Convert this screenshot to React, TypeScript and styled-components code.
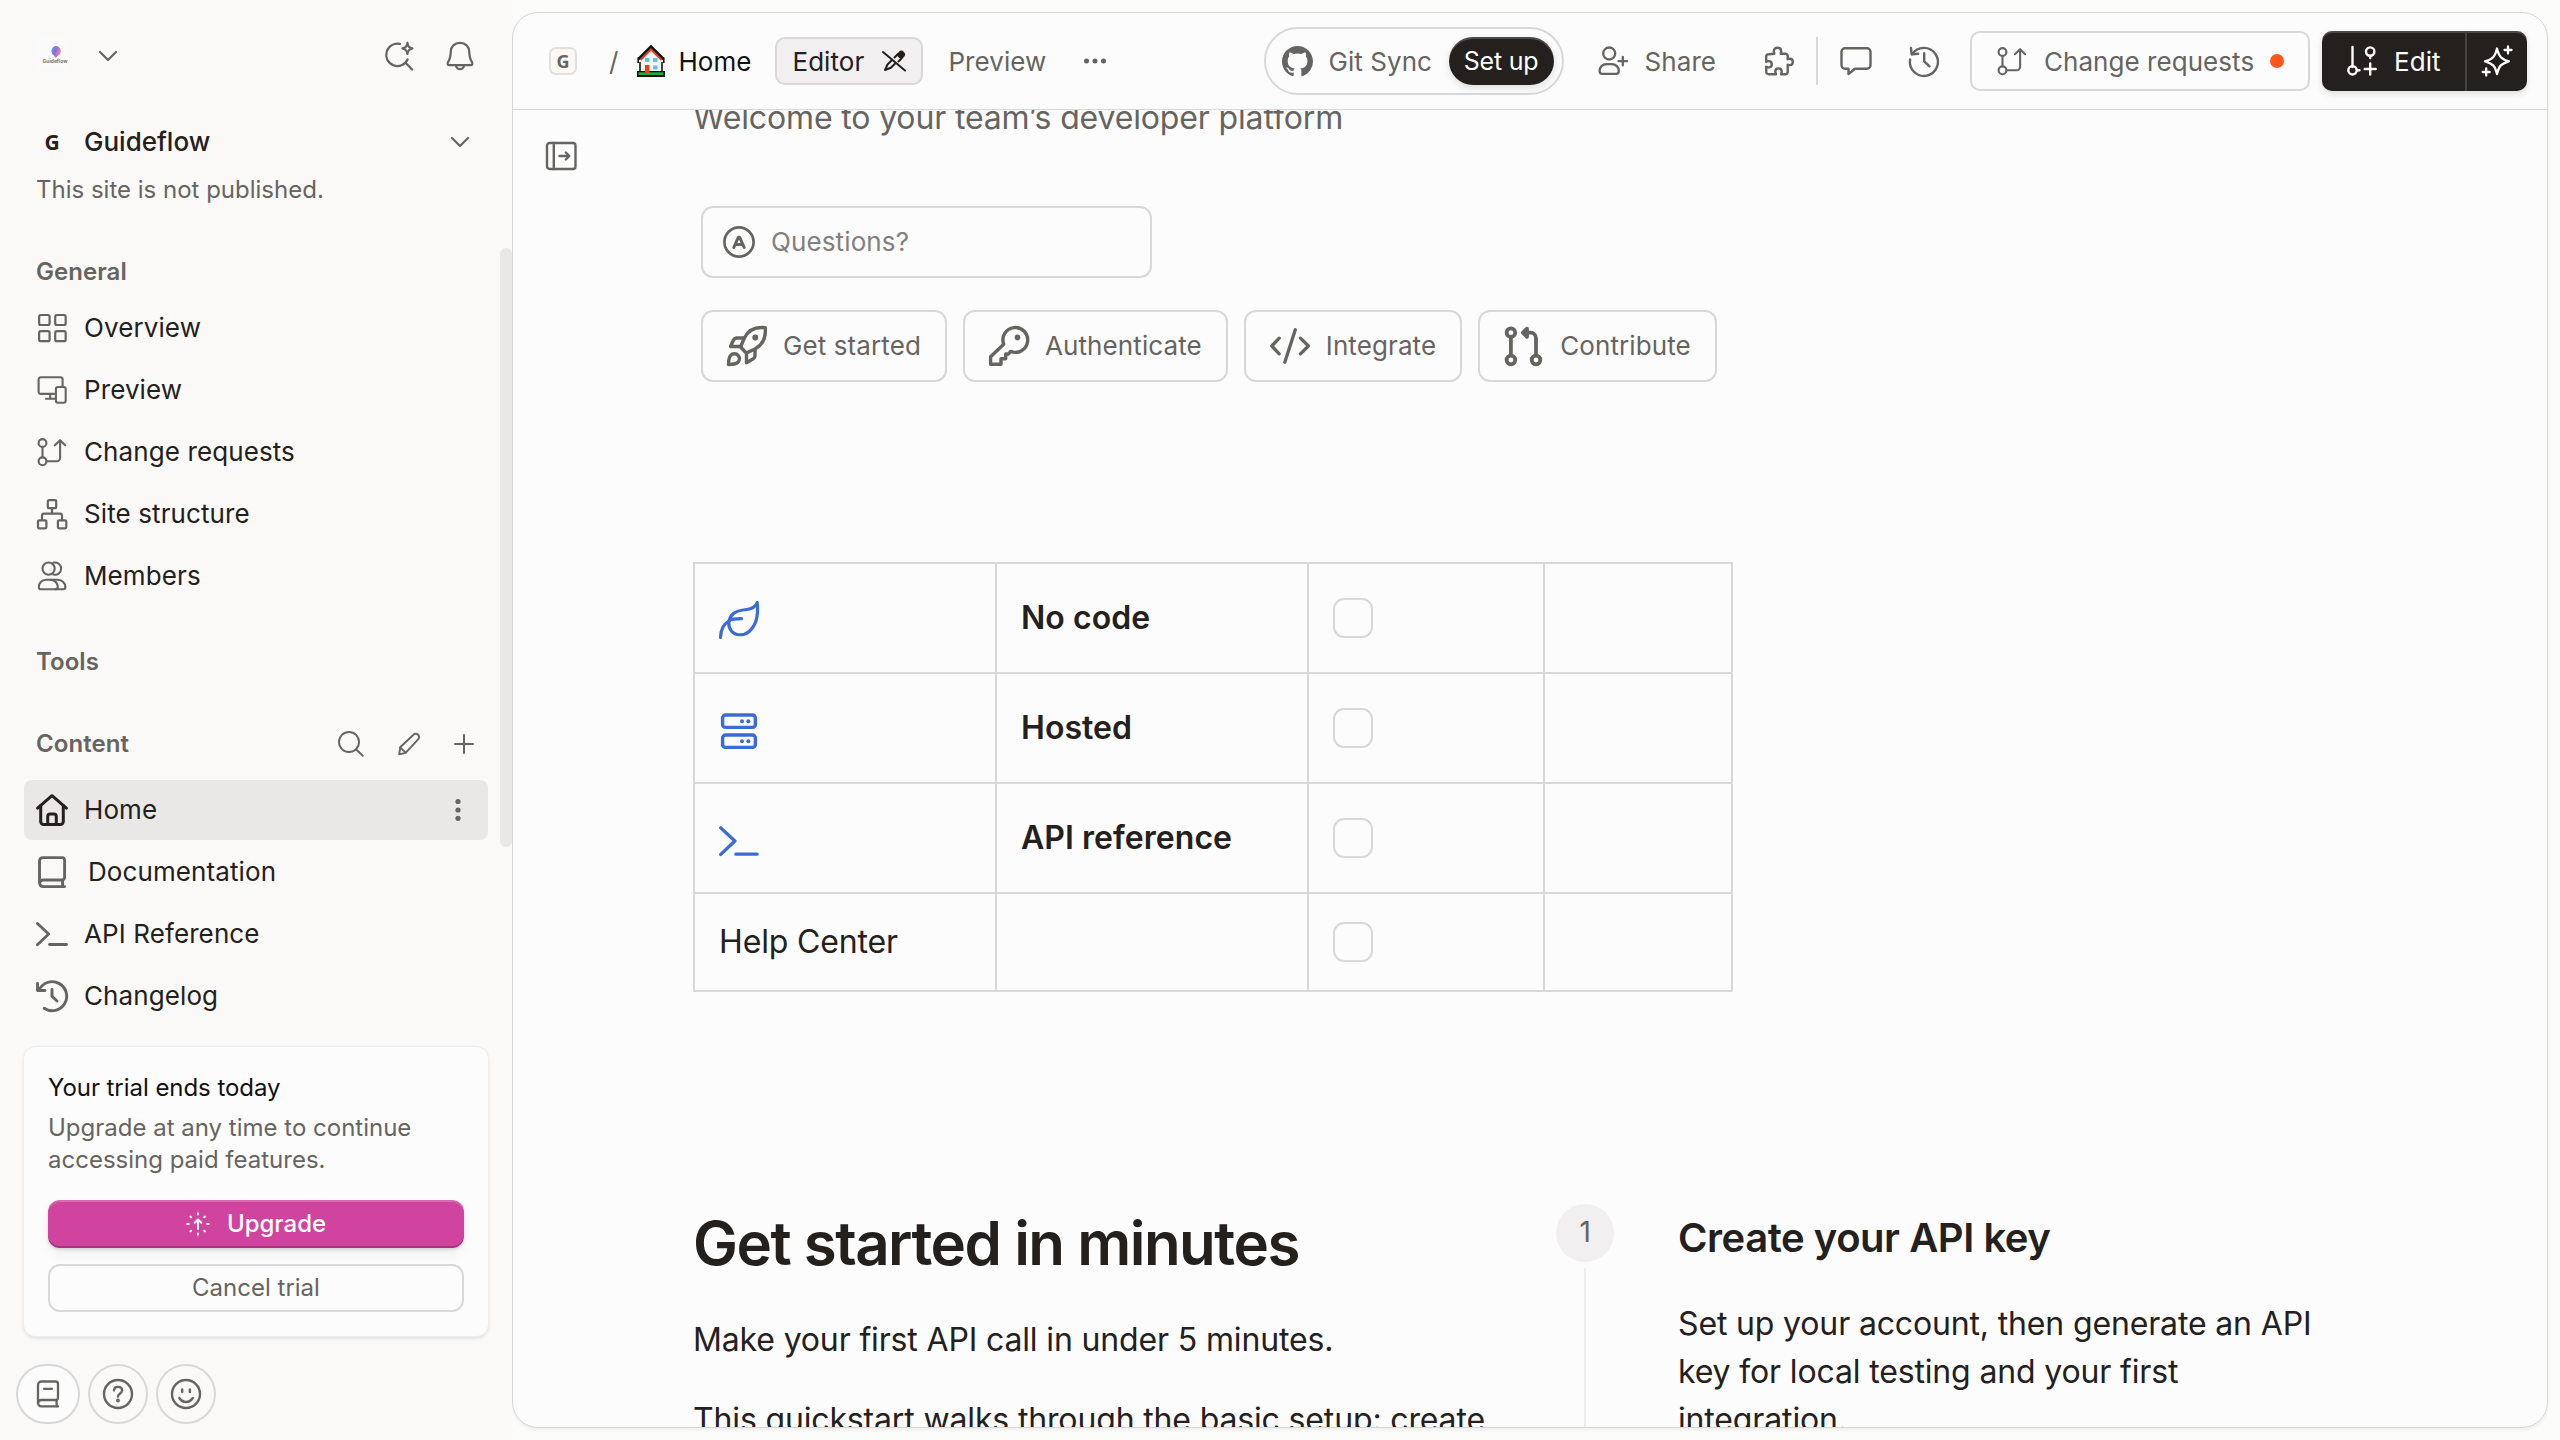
import React from "react";
import styled, { createGlobalStyle } from "styled-components";
import { BsGithub } from "react-icons/bs";

const ink = "#23201d";
const muted = "#666461";
const line = "#dad8d6";
const paper = "#fcfcfc";

const GlobalStyle = createGlobalStyle`
  * { box-sizing: border-box; }
  body {
    margin: 0;
    background: #fcfcfb;
    font-family: Inter, "Liberation Sans", sans-serif;
    color: ${ink};
    overflow: hidden;
  }
  h1, h2, p { margin: 0; }
  button { font: inherit; color: inherit; cursor: pointer; }
  svg { display: block; flex: none; }
`;

/* ---------- icons ---------- */

type IconProps = {
  w?: number;
  h?: number;
  sw?: number;
  color?: string;
  children: React.ReactNode;
};

const Icon = ({ w = 32, h = w, sw = 2.2, color = "currentColor", children }: IconProps) => (
  <svg
    width={w}
    height={h}
    viewBox={`0 0 ${w} ${h}`}
    fill="none"
    stroke={color}
    strokeWidth={sw}
    strokeLinecap="round"
    strokeLinejoin="round"
    overflow="visible"
  >
    {children}
  </svg>
);

const ChevronIcon = () => (
  <Icon w={18} h={10} sw={2.2}><path d="M1 1l8 8 8-8" /></Icon>
);
const AskIcon = () => (
  <Icon w={30} sw={2.2}>
    <path d="M15 2.9A11.2 11.2 0 1 0 22.6 18.5" />
    <path d="M20.5 21.7l6.6 6.8" />
    <path d="M22.4 1.9c.8 3.6 1.6 4.6 5 5.5-3.4.9-4.2 1.9-5 5.5-.8-3.6-1.6-4.6-5-5.5 3.4-.9 4.2-1.9 5-5.5z" />
  </Icon>
);
const BellIcon = () => (
  <Icon w={28} h={30} sw={2.2}>
    <path d="M14 1.8c-5.6 0-9 4-9.2 8.6-.2 5-.7 7.5-2.5 10.2-1.2 1.9-.9 3.6 1.2 3.6h21c2.1 0 2.4-1.7 1.2-3.6-1.8-2.700-2.300-5.200-2.500-10.200C23 5.800 19.600 1.800 14 1.800z" />
    <path d="M10.200 25.500c.6 1.800 2 2.700 3.800 2.700s3.200-.9 3.800-2.700" />
  </Icon>
);
const GridIcon = () => (
  <Icon>
    <rect x="3.1" y="3" width="10.5" height="10" rx="1.8" />
    <rect x="19.2" y="3" width="10.5" height="10" rx="1.8" />
    <rect x="3.1" y="19.2" width="10.5" height="10" rx="1.8" />
    <rect x="19.2" y="19.2" width="10.5" height="10" rx="1.8" />
  </Icon>
);
const DevicesIcon = () => (
  <Icon sw={2.1}>
    <path d="M18 19.9H4.8a2.2 2.2 0 0 1-2.2-2.2V5.5a2.2 2.2 0 0 1 2.2-2.2H24.4a2.2 2.2 0 0 1 2.2 2.2V12" />
    <path d="M14.2 20v4.6M10 24.700h8.500" />
    <rect x="19.900" y="13" width="9.800" height="15.800" rx="2" />
  </Icon>
);
const RequestIcon = () => (
  <Icon sw={2.1}>
    <circle cx="6.5" cy="7" r="3.9" />
    <circle cx="6.5" cy="25.3" r="3.9" />
    <path d="M6.5 11v10.3M10.5 25.3H20.5a3.6 3.6 0 0 0 3.6-3.6V4.5M18.9 9.2L24.1 4.2l5 5" />
  </Icon>
);
const SitemapIcon = () => (
  <Icon>
    <rect x="11.800" y="2.200" width="8.400" height="8" rx="1.200" />
    <rect x="2" y="22.300" width="8.400" height="8" rx="1.200" />
    <rect x="21.900" y="22.300" width="8.400" height="8" rx="1.200" />
    <path d="M16 10.500v5M6 22v-4.300a2 2 0 0 1 2-2h16a2 2 0 0 1 2 2V22" />
  </Icon>
);
const MembersIcon = () => (
  <Icon sw={2.1}>
    <circle cx="12.600" cy="8.600" r="6.100" />
    <path d="M17.300 2.800a6.100 6.100 0 1 1 0 11.700" />
    <path d="M10 19.800h4.400c4.400 0 7.400 3.600 7.400 7.200 0 1.500-.8 2.200-2.200 2.200H5c-1.400 0-2.200-.7-2.200-2.200 0-3.600 2.800-7.200 7.200-7.200z" />
    <path d="M14.400 19.800h7.400c4.400 0 7.600 3.600 7.600 7.200 0 1.500-.8 2.200-2.200 2.200h-8" />
  </Icon>
);
const SearchIcon = () => (
  <Icon w={26} sw={1.9}><circle cx="11" cy="11" r="10" /><path d="M18 18.200l6.800 6.600" /></Icon>
);
const PencilIcon = () => (
  <Icon w={24} sw={1.9}>
    <path d="M2.200 22.300l1-7L16.500 2.700a3.200 3.200 0 0 1 4.600 0 3.200 3.200 0 0 1 0 4.600L8.600 20.800z" />
    <path d="M3.300 15.400l5.300 5.300" />
  </Icon>
);
const PlusIcon = () => (
  <Icon w={20} sw={2}><path d="M10 1v18M1 10h18" /></Icon>
);
const HomeIcon = () => (
  <Icon sw={3}>
    <path d="M1.600 14.200L16 1.700l14.400 12.500" />
    <path d="M4.700 11.500V27.500a3 3 0 0 0 3 3h16.600a3 3 0 0 0 3-3V11.500" />
    <path d="M11.700 30V22.500a2.500 2.500 0 0 1 2.500-2.500h3.600a2.500 2.500 0 0 1 2.500 2.500V30" />
  </Icon>
);
const BookIcon = () => (
  <Icon sw={2.9}>
    <path d="M3.500 27V5a3.400 3.400 0 0 1 3.400-3.400h19.200A2.500 2.500 0 0 1 28.600 4v17.500a2.500 2.500 0 0 1-2.500 2.500H7a3.300 3.300 0 0 0 0 6.600H28.600" />
    <path d="M26.600 24.500v6" />
  </Icon>
);
const TerminalIcon = ({ size = 32, sw = 2.8 }: { size?: number; sw?: number }) => (
  <svg width={size} height={size} viewBox="0 0 32 32" fill="none" stroke="currentColor" strokeWidth={sw} strokeLinecap="round" strokeLinejoin="round">
    <path d="M1.400 5.500L12.700 16 1.400 26.700M13.500 26.500h17" />
  </svg>
);
const ChangelogIcon = () => (
  <Icon sw={2.9}>
    <path d="M3 10.200A14.500 14.500 0 1 1 8.200 28.300" />
    <path d="M1.500 3.500v7h7.500" />
    <path d="M16 9.500v6.800l5 4.700" />
  </Icon>
);
const KebabIcon = () => (
  <Icon w={6} h={24} sw={0}>
    <g fill="currentColor"><circle cx="3" cy="3.500" r="2.600" /><circle cx="3" cy="12" r="2.600" /><circle cx="3" cy="20.300" r="2.600" /></g>
  </Icon>
);
const UpgradeIcon = () => (
  <Icon w={24} sw={2}>
    <path d="M12 17V8M8.700 10.800L12 7.500l3.300 3.300" />
    <path d="M12 1.200v1.300M12 21.500v1.300M1.200 12h1.600M21.200 12h1.600M4.400 4.600l.7.700M18.900 4.600l-.7.700M4.400 19.400l.7-.7M18.900 19.400l-.7-.7" />
  </Icon>
);
const ManualIcon = () => (
  <Icon w={24} h={28} sw={2.3}>
    <path d="M2 23.500V4.800A3.300 3.300 0 0 1 5.300 1.500H19.500A2.500 2.500 0 0 1 22 4V17.500A2.500 2.500 0 0 1 20.500 20H5.300a3.200 3.200 0 0 0 0 6.400H22" />
    <path d="M20.600 20.300v6M8 8.800h8" />
  </Icon>
);
const HelpIcon = () => (
  <Icon w={32} sw={2.4}>
    <circle cx="16" cy="16" r="14" />
    <path d="M12 12.300c.2-2.200 1.900-3.400 4-3.400 2.400 0 4.100 1.400 4.100 3.600 0 2.900-4.100 3-4.100 6" />
    <circle cx="16" cy="22.500" r=".7" fill="currentColor" />
  </Icon>
);
const SmileIcon = () => (
  <Icon w={32} sw={2.4}>
    <circle cx="16" cy="16" r="14" />
    <path d="M12.200 11.500v2.500M19.900 11.500v2.500M9.300 20c3.500 5.300 10 5.300 13.500 0" />
  </Icon>
);
const HouseEmoji = () => (
  <svg width="28" height="32" viewBox="0 0 28 32">
    <path d="M4 15V26H24V15L14 5z" fill="#f4f4f1" />
    <path d="M1.500 14L14 1.500 26.500 14" fill="none" stroke="#111" strokeWidth="2.600" />
    <path d="M3.500 15L14 4.500 24.500 15" fill="none" stroke="#e8401c" strokeWidth="1.800" />
    <path d="M1.200 12.500V18M26.800 12.500V18M3 17v10M25 17v10" stroke="#111" strokeWidth="1.600" />
    <rect x="0" y="26" width="28" height="6" fill="#111" />
    <rect x="1.500" y="27.300" width="25" height="2.700" fill="#1fae2b" />
    <rect x="8" y="20" width="4.500" height="8.500" fill="#e8401c" />
    <rect x="8" y="13" width="4.500" height="4" fill="#53c7ee" />
    <rect x="16" y="13" width="4.500" height="4" fill="#53c7ee" />
    <rect x="16" y="20.500" width="4.500" height="4" fill="#53c7ee" />
  </svg>
);
const PenSlashIcon = () => (
  <Icon w={24} h={20} sw={2}>
    <path d="M15.500 3.500l2-1.900a2.600 2.600 0 0 1 3.700 3.700l-2 2z" fill="currentColor" />
    <path d="M12.500 6.500l3-3 4 4-3 3M9.500 9.500L5.500 13.500 3 19l5.800-2.200L13 12.800" />
    <path d="M1 1l22 18.500" />
  </Icon>
);
const DotsIcon = () => (
  <Icon w={24} h={6} sw={0}>
    <g fill="currentColor"><circle cx="3.500" cy="3" r="2.500" /><circle cx="12" cy="3" r="2.500" /><circle cx="20.500" cy="3" r="2.500" /></g>
  </Icon>
);
const PersonPlusIcon = () => (
  <Icon w={30} h={30} sw={2.3}>
    <circle cx="11.200" cy="7.500" r="6" />
    <path d="M8.600 18.200h5.200c4.200 0 7 3 7 6.800 0 1.900-.9 2.900-2.600 2.900H4.200c-1.700 0-2.600-1-2.600-2.900 0-3.800 2.800-6.800 7-6.800z" />
    <path d="M24.800 10.800v8.600M20.500 15.100h8.600" />
  </Icon>
);
const PuzzleIcon = () => (
  <Icon w={30} sw={2.4}>
    <path d="M10.300 7.800c0-.5-.5-1.200-.5-2.400C9.800 3.100 11.400 1.800 13.500 1.800s3.700 1.300 3.700 3.600c0 1.200-.5 1.900-.5 2.400h4.600c1.500 0 2.400.9 2.400 2.400v3c.6 0 1.200-.5 2-.5 1.900 0 3.100 1.400 3.100 3.200s-1.200 3.200-3.100 3.200c-.8 0-1.400-.5-2-.5v7.200c0 1.500-.9 2.400-2.400 2.400h-4.200c0-1 .6-1.500.6-2.700 0-1.900-1.300-3.100-3.200-3.100s-3.200 1.200-3.200 3.100c0 1.200.6 1.700.6 2.700H5c-1.800 0-2.800-1-2.800-2.800v-4.600c.9 0 1.400.6 2.400.6 1.900 0 3.200-1.300 3.200-3.100s-1.300-3.200-3.200-3.200c-1 0-1.500.6-2.400.6v-5.100c0-1.500.9-2.400 2.400-2.400z" />
  </Icon>
);
const CommentIcon = () => (
  <Icon w={32} h={30} sw={2.4}>
    <path d="M5 2.200h22a3.500 3.500 0 0 1 3.500 3.500v13.600a3.500 3.500 0 0 1-3.500 3.500H15l-6.500 5.200v-5.200H5a3.500 3.500 0 0 1-3.500-3.500V5.700A3.500 3.500 0 0 1 5 2.200z" />
  </Icon>
);
const HistoryIcon = () => (
  <Icon w={32} sw={2.4}>
    <path d="M4.200 9.200A14 14 0 1 1 2.100 14.500" />
    <path d="M3 3l.6 6.400 6.500-.6" />
    <path d="M16.200 8.300v8l5.300 5" />
  </Icon>
);
const BranchPlusIcon = () => (
  <Icon w={32} sw={2.4}>
    <path d="M6.500 2v20" />
    <circle cx="6.500" cy="25.300" r="4.200" />
    <circle cx="24.200" cy="6.600" r="4.200" />
    <path d="M24.200 11v2M11 25.300h2.500M24.200 18.500v11M18.700 24h11" />
  </Icon>
);
const SparkleIcon = () => (
  <Icon w={32} sw={2.3}>
    <path d="M16 3.500c2 8.300 4.300 10.600 12 12.800-7.700 2.200-10 4.500-12 12.800C14 20.800 11.700 18.500 4 16.300 11.700 14.100 14 11.800 16 3.500z" />
    <path d="M27 1.500v7M23.500 5h7M5.200 23.500v7M1.700 27h7" />
  </Icon>
);
const PanelIcon = () => (
  <Icon w={32} h={30} sw={2.4}>
    <rect x="2" y="2" width="28.500" height="26" rx="2.600" />
    <path d="M8.800 2v26M14.500 15h9.500M20.800 11.500l3.500 3.500-3.500 3.500" />
  </Icon>
);
const AssistantIcon = () => (
  <Icon w={32} sw={2.7}>
    <circle cx="16" cy="16" r="14.600" />
    <path d="M10.800 21.500L15.400 11.200h1.200L21.200 21.500M13 18.400h6" strokeWidth="3" />
  </Icon>
);
const RocketIcon = () => (
  <Icon w={40} sw={3.4}>
    <path d="M38.300 1.700C29 .6 21.500 3.500 17.400 12L13.500 21l5.800 6 9.200-4.200C37 18 39 11 38.300 1.700z" />
    <path d="M17 12H9.500c-1.500 0-2.200.6-2.900 1.800L3.500 20.500H14M28 23.500V30c0 1.400-.5 2.100-1.700 2.800l-6.800 3.900V27" />
    <path d="M1.500 38.500c0-4 .3-7 2-9 2-2.300 5.800-2.300 7.600-.2 1.900 2.200 1.600 5.500-.6 7.400-2 1.600-5 1.800-9 1.800z" />
    <circle cx="28.300" cy="11.400" r="1.300" fill="currentColor" />
  </Icon>
);
const KeyIcon = () => (
  <Icon w={40} sw={3.4}>
    <path d="M14.700 18.300A12.400 12.400 0 1 1 21.600 25.400L19.500 28H16.700v4.700H12v5.600H1.600v-7.500z" />
    <circle cx="28.500" cy="11.400" r="1.100" fill="currentColor" />
  </Icon>
);
const CodeIcon = () => (
  <Icon w={40} sw={3.3}><path d="M9.200 12.200L1.800 20l7.400 7.800M30.500 12.200l7.900 7.800-7.900 7.800M25.300 3.800L14.800 36.200" /></Icon>
);
const PullIcon = () => (
  <Icon w={40} sw={3.8}>
    <circle cx="6.900" cy="6.700" r="4.300" />
    <circle cx="6.900" cy="34" r="4.300" />
    <circle cx="32" cy="34" r="4.300" />
    <path d="M6.900 11.500v17.700M32 29.200V12.300A5.600 5.600 0 0 0 26.400 6.700H20M23 2.600L18.900 6.700l4.100 4.100z" />
  </Icon>
);
const LeafIcon = () => (
  <Icon w={40} sw={3.2}>
    <path d="M1.500 36.500c.2-8 4-14 9-17 2.500-1.600 6-1.800 12-1.800" />
    <path d="M38.300 1.700c-1.500 3.500-5 6.300-10.500 6.800-5.500.5-10 .9-13.600 4.200-5.200 4.900-5.700 12.300-2 17 4.300 5.200 12.200 5.400 18 .7C37.500 24.300 39.300 12.500 38.300 1.700z" />
  </Icon>
);
const ServerIcon = () => (
  <Icon w={40} sw={3.4}>
    <rect x="3.600" y="4" width="32.800" height="12.400" rx="3" />
    <rect x="3.600" y="24" width="32.800" height="12.400" rx="3" />
    <g fill="currentColor" stroke="none">
      <circle cx="23" cy="10.200" r="2" /><circle cx="29.300" cy="10.200" r="2" />
      <circle cx="23" cy="30.200" r="2" /><circle cx="29.300" cy="30.200" r="2" />
    </g>
  </Icon>
);

/* ---------- shell ---------- */

const Shell = styled.div`
  display: grid;
  grid-template-columns: 512px 1fr;
  width: 2560px;
  height: 1440px;
`;

/* ---------- sidebar ---------- */

const Sidebar = styled.aside`
  position: relative;
  display: flex;
  flex-direction: column;
  background: #faf9f7;
  padding: 0 24px;
  color: ${muted};
`;
const SideTop = styled.div`
  display: flex;
  align-items: center;
  height: 112px;
  padding: 0 14px 0 12px;
`;
const Logo = styled.div`
  display: flex;
  flex-direction: column;
  align-items: center;
  width: 32px;
  height: 32px;
  margin: 0 31px 5px 0;
  padding: 8px 0 0 6px;
  background: #fbfafa;
`;
const LogoText = styled.span`
  font-size: 5px;
  line-height: 7px;
  font-weight: 700;
  color: #777;
`;
const TopActions = styled.div`
  display: flex;
  align-items: center;
  gap: 31px;
  margin-left: auto;
`;
const SiteRow = styled.div`
  display: flex;
  align-items: center;
  height: 60px;
  padding: 0 19px 0 12px;
  color: ${ink};
  font-size: 26px;
  font-weight: 500;
`;
const SiteName = styled.span`
  flex: 1;
  margin-left: 16px;
  padding-bottom: 2px;
`;
const SiteInitial = styled.span`
  width: 32px;
  text-align: center;
  font: 700 21px/32px "Noto Sans", sans-serif;
`;
const Muted = styled.span`
  display: flex;
  color: ${muted};
`;
const SiteStatus = styled.p`
  padding-left: 12px;
  font-size: 24px;
  line-height: 36px;
`;
const SectionHead = styled.div<{ $top: number }>`
  display: flex;
  align-items: center;
  height: 46px;
  margin: ${(p) => p.$top}px 0 2px;
  padding: 0 14px 0 12px;
  font-size: 24px;
  font-weight: 600;
  letter-spacing: 0.05px;
`;
const HeadActions = styled.div`
  display: flex;
  align-items: center;
  gap: 33px;
  margin: 2px 0 0 auto;
`;
const NavList = styled.nav<{ $top: number }>`
  display: flex;
  flex-direction: column;
  gap: 2px;
  margin-top: ${(p) => p.$top}px;
`;
const NavItem = styled.a<{ $active?: boolean }>`
  display: flex;
  align-items: center;
  height: 60px;
  padding: 0 27px 0 12px;
  border-radius: 8px;
  background: ${(p) => (p.$active ? "#e9e8e6" : "transparent")};
  color: ${(p) => (p.$active ? ink : muted)};
`;
const NavLabel = styled.span<{ $indent?: number }>`
  flex: 1;
  margin-left: ${(p) => 16 + (p.$indent ?? 0)}px;
  padding-bottom: 2px;
  color: ${ink};
  font-size: 26px;
  letter-spacing: 0.1px;
`;
const TrialCard = styled.section`
  display: flex;
  flex-direction: column;
  height: 289px;
  margin-top: 21px;
  padding: 24px 24px 24px;
  border-radius: 12px;
  background: ${paper};
  box-shadow: 0 0 0 1px #eeedeb, 0 2px 4px rgba(0, 0, 0, 0.12);
  font-size: 24px;
  line-height: 32px;
`;
const TrialTitle = styled.p`
  margin: 1px 0 8px;
  color: #111;
  letter-spacing: -0.05px;
  line-height: 32px;
`;
const CardButton = styled.button<{ $primary?: boolean }>`
  display: flex;
  align-items: center;
  justify-content: center;
  gap: 17px;
  height: 48px;
  flex: none;
  padding: 0;
  border-radius: 12px;
  border: ${(p) => (p.$primary ? "0" : `2px solid ${line}`)};
  margin-top: ${(p) => (p.$primary ? "auto" : "16px")};
  background: ${(p) => (p.$primary ? "#d0439e" : paper)};
  color: ${(p) => (p.$primary ? "#fff" : muted)};
  font-weight: ${(p) => (p.$primary ? 500 : 400)};
  box-shadow: ${(p) =>
    p.$primary
      ? "inset 0 2px 0 rgba(255,255,255,.2), inset 0 -2px 0 rgba(0,0,0,.22), 0 2px 3px rgba(0,0,0,.12), 0 6px 12px rgba(0,0,0,.05)"
      : "none"};
`;
const SideFooter = styled.div`
  display: flex;
  gap: 8px;
  margin: 28px 0 0 -8px;
`;
const RoundButton = styled.button<{ $raised?: boolean }>`
  display: flex;
  align-items: center;
  justify-content: center;
  width: ${(p) => (p.$raised ? 64 : 60)}px;
  height: 60px;
  padding: 0;
  border: 2px solid ${line};
  border-radius: 32px;
  background: ${(p) => (p.$raised ? paper : "transparent")};
`;
const Scrollbar = styled.div`
  position: absolute;
  right: 0;
  top: 248px;
  width: 12px;
  height: 599px;
  border-radius: 6px;
  background: #e9e8e6;
`;

/* ---------- main panel ---------- */

const Panel = styled.main`
  display: flex;
  flex-direction: column;
  width: 2036px;
  height: 1416px;
  margin-top: 12px;
  border: 1px solid ${line};
  border-radius: 26px;
  background: ${paper};
  box-shadow: 0 2px 4px rgba(0, 0, 0, 0.06);
  overflow: hidden;
`;
const Header = styled.header`
  display: flex;
  align-items: center;
  flex: none;
  height: 97px;
  padding: 0 20px 0 36px;
  border-bottom: 1px solid ${line};
  color: ${muted};
  font-size: 26px;
  letter-spacing: 0.05px;
`;
const SpaceTile = styled.span`
  width: 28px;
  height: 28px;
  border: 2px solid #e2e0de;
  border-radius: 7px;
  background: #fbf8f6;
  text-align: center;
  font: 700 18px/25px "Noto Sans", sans-serif;
`;
const Slash = styled.span`
  margin: 0 19px 0 32px;
`;
const Crumb = styled.span`
  display: flex;
  align-items: center;
  gap: 13px;
  margin-right: 24px;
  color: #141210;
`;
const ModeTab = styled.button`
  display: flex;
  align-items: center;
  justify-content: space-between;
  width: 148px;
  height: 48px;
  padding: 0 15px;
  border: 2px solid ${line};
  border-radius: 10px;
  background: #f1efef;
  color: ${ink};
  letter-spacing: inherit;
`;
const PreviewTab = styled.span`
  margin: 0 37px 0 25px;
`;
const SyncPill = styled.div`
  display: flex;
  align-items: center;
  width: 300px;
  height: 68px;
  margin-left: auto;
  padding: 0 8px 0 16px;
  border: 2px solid ${line};
  border-radius: 34px;
`;
const SyncLabel = styled.span`
  flex: 1;
  margin-left: 16px;
`;
const SetupButton = styled.button`
  width: 105px;
  height: 48px;
  padding: 0;
  border: 0;
  border-radius: 24px;
  background: ${ink};
  color: #fff;
  font-size: 25px;
  letter-spacing: -0.2px;
  box-shadow: inset 0 2px 0 rgba(255, 255, 255, 0.2), 0 3px 8px rgba(0, 0, 0, 0.12);
`;
const HeaderAction = styled.span<{ $left: number }>`
  display: flex;
  align-items: center;
  gap: 17px;
  margin-left: ${(p) => p.$left}px;
`;
const Divider = styled.i`
  width: 2px;
  height: 48px;
  margin-left: 22px;
  background: ${line};
`;
const RequestsButton = styled.button`
  display: flex;
  align-items: center;
  width: 340px;
  height: 60px;
  margin-left: 30px;
  padding: 0 24px;
  border: 2px solid ${line};
  border-radius: 10px;
  background: ${paper};
  letter-spacing: inherit;
`;
const RequestsLabel = styled.span`
  flex: 1;
  margin-left: 16px;
  text-align: left;
`;
const Dot = styled.i`
  width: 14px;
  height: 14px;
  border-radius: 50%;
  background: #fe551b;
`;
const EditGroup = styled.div`
  display: flex;
  width: 205px;
  height: 60px;
  margin-left: 12px;
  border-radius: 10px;
  background: ${ink};
  color: #fff;
  overflow: hidden;
  box-shadow: inset 0 2px 0 rgba(255, 255, 255, 0.18), 0 3px 6px rgba(0, 0, 0, 0.12);
`;
const EditMain = styled.span`
  display: flex;
  align-items: center;
  gap: 16px;
  width: 143px;
  padding-left: 24px;
`;
const EditAssist = styled.span`
  display: flex;
  align-items: center;
  justify-content: center;
  flex: 1;
  border-left: 2px solid #45423f;
`;

const Content = styled.div`
  display: grid;
  grid-template-columns: 180px 1fr;
  flex: 1;
  min-height: 0;
  overflow: hidden;
`;
const Gutter = styled.div`
  padding: 31px 0 0 32px;
  color: ${muted};
`;
const Article = styled.article`
  display: flex;
  flex-direction: column;
  min-height: 0;
  font-size: 32px;
  line-height: 48px;
  letter-spacing: -0.15px;
`;
const Tagline = styled.p`
  margin-top: -16.500px;
  color: ${muted};
`;
const AskField = styled.div`
  display: flex;
  align-items: center;
  gap: 16px;
  width: 451px;
  height: 72px;
  flex: none;
  margin: 64.500px 0 0 8px;
  padding: 0 20px;
  border: 2px solid ${line};
  border-radius: 12px;
  color: ${muted};
  font-size: 26px;
  letter-spacing: 0.12px;
`;
const Placeholder = styled.span`
  color: #827f7c;
`;
const Shortcuts = styled.div`
  display: flex;
  gap: 16px;
  margin: 32px 0 0 8px;
`;
const Shortcut = styled.button`
  display: flex;
  align-items: center;
  gap: 16px;
  height: 72px;
  padding: 0 24px;
  border: 2px solid ${line};
  border-radius: 12px;
  background: ${paper};
  color: ${muted};
  font-size: 26px;
  letter-spacing: 0.1px;
`;
const Table = styled.div`
  display: grid;
  grid-template-columns: 302px 312px 236px 188px;
  grid-template-rows: 110px 110px 110px 98px;
  flex: none;
  width: 1040px;
  margin-top: 180px;
  border: solid ${line};
  border-width: 2px 0 0 2px;
`;
const Cell = styled.div<{ $blue?: boolean; $strong?: boolean }>`
  display: flex;
  align-items: center;
  padding: 0 24px;
  border: solid ${line};
  border-width: 0 2px 2px 0;
  color: ${(p) => (p.$blue ? "#3a6cd4" : ink)};
  font-weight: ${(p) => (p.$strong ? 600 : 400)};
  letter-spacing: ${(p) => (p.$strong ? 0.05 : -0.15)}px;
  svg { margin-top: 6px; }
`;
const Checkbox = styled.span`
  width: 40px;
  height: 40px;
  border: 2px solid ${line};
  border-radius: 11px;
`;
const Columns = styled.div`
  display: grid;
  grid-template-columns: 863px 58px 1fr;
  margin-top: 211px;
`;
const Intro = styled.section`
  display: flex;
  flex-direction: column;
  gap: 32px;
  white-space: nowrap;
`;
const Heading = styled.h1`
  margin-bottom: 1px;
  font-size: 60px;
  line-height: 80px;
  font-weight: 600;
  letter-spacing: -1.5px;
`;
const Rail = styled.div`
  display: flex;
  flex-direction: column;
  align-items: center;
  gap: 6px;
`;
const StepNumber = styled.span`
  width: 58px;
  height: 58px;
  margin-top: 1px;
  flex: none;
  border-radius: 50%;
  background: #f1efef;
  color: ${muted};
  font-size: 28px;
  line-height: 57px;
  text-align: center;
`;
const StepLine = styled.i`
  width: 2px;
  height: 260px;
  background: #efedec;
`;
const Step = styled.section`
  padding-left: 64px;
  white-space: nowrap;
`;
const StepTitle = styled.h2`
  margin: 4px 0 31px;
  font-size: 40px;
  line-height: 62px;
  font-weight: 600;
  letter-spacing: -0.45px;
`;

const general = [
  { label: "Overview", icon: <GridIcon /> },
  { label: "Preview", icon: <DevicesIcon /> },
  { label: "Change requests", icon: <RequestIcon /> },
  { label: "Site structure", icon: <SitemapIcon /> },
  { label: "Members", icon: <MembersIcon /> },
];
const shortcuts = [
  { label: "Get started", icon: <RocketIcon /> },
  { label: "Authenticate", icon: <KeyIcon /> },
  { label: "Integrate", icon: <CodeIcon /> },
  { label: "Contribute", icon: <PullIcon /> },
];
const rows = [
  { lead: <LeafIcon />, title: "No code" },
  { lead: <ServerIcon />, title: "Hosted" },
  { lead: <TerminalIcon size={40} sw={2.7} />, title: "API reference" },
  { lead: "Help Center", title: "" },
];

const SidebarView = () => (
  <Sidebar>
    <SideTop>
      <Logo>
        <svg width="11" height="12" viewBox="0 0 11 12">
          <defs>
            <linearGradient id="blob" x1="0" x2="1" y1="0" y2=".5">
              <stop offset="0" stopColor="#3f8cf0" />
              <stop offset=".5" stopColor="#7a55d0" />
              <stop offset="1" stopColor="#f0788c" />
            </linearGradient>
          </defs>
          <path d="M5.500 0a5.200 5.200 0 0 1 2.500 9.800L5.800 12 4 9.500A5.200 5.200 0 0 1 5.500 0z" fill="url(#blob)" opacity=".85" />
        </svg>
        <LogoText>Guideflow</LogoText>
      </Logo>
      <ChevronIcon />
      <TopActions><AskIcon /><BellIcon /></TopActions>
    </SideTop>
    <SiteRow>
      <SiteInitial>G</SiteInitial>
      <SiteName>Guideflow</SiteName>
      <Muted><ChevronIcon /></Muted>
    </SiteRow>
    <SiteStatus>This site is not published.</SiteStatus>

    <SectionHead $top={40}>General</SectionHead>
    <NavList $top={2}>
      {general.map((g) => (
        <NavItem key={g.label}>{g.icon}<NavLabel>{g.label}</NavLabel></NavItem>
      ))}
    </NavList>

    <SectionHead $top={32}>Tools</SectionHead>
    <SectionHead $top={34}>
      Content
      <HeadActions><SearchIcon /><PencilIcon /><PlusIcon /></HeadActions>
    </SectionHead>
    <NavList $top={12}>
      <NavItem $active>
        <HomeIcon /><NavLabel>Home</NavLabel><Muted><KebabIcon /></Muted>
      </NavItem>
      <NavItem><BookIcon /><NavLabel $indent={4}>Documentation</NavLabel></NavItem>
      <NavItem><TerminalIcon /><NavLabel>API Reference</NavLabel></NavItem>
      <NavItem><ChangelogIcon /><NavLabel>Changelog</NavLabel></NavItem>
    </NavList>

    <TrialCard>
      <TrialTitle>Your trial ends today</TrialTitle>
      <p>Upgrade at any time to continue accessing paid features.</p>
      <CardButton $primary><UpgradeIcon />Upgrade</CardButton>
      <CardButton>Cancel trial</CardButton>
    </TrialCard>
    <SideFooter>
      <RoundButton $raised><ManualIcon /></RoundButton>
      <RoundButton><HelpIcon /></RoundButton>
      <RoundButton><SmileIcon /></RoundButton>
    </SideFooter>
    <Scrollbar />
  </Sidebar>
);

const HeaderView = () => (
  <Header>
    <SpaceTile>G</SpaceTile>
    <Slash>/</Slash>
    <Crumb><HouseEmoji />Home</Crumb>
    <ModeTab>Editor<PenSlashIcon /></ModeTab>
    <PreviewTab>Preview</PreviewTab>
    <DotsIcon />
    <SyncPill>
      <BsGithub size={31} />
      <SyncLabel>Git Sync</SyncLabel>
      <SetupButton>Set up</SetupButton>
    </SyncPill>
    <HeaderAction $left={34}><PersonPlusIcon />Share</HeaderAction>
    <HeaderAction $left={48}><PuzzleIcon /></HeaderAction>
    <Divider />
    <HeaderAction $left={22}><CommentIcon /></HeaderAction>
    <HeaderAction $left={36}><HistoryIcon /></HeaderAction>
    <RequestsButton>
      <RequestIcon />
      <RequestsLabel>Change requests</RequestsLabel>
      <Dot />
    </RequestsButton>
    <EditGroup>
      <EditMain><BranchPlusIcon />Edit</EditMain>
      <EditAssist><SparkleIcon /></EditAssist>
    </EditGroup>
  </Header>
);

export default function App() {
  return (
    <>
      <GlobalStyle />
      <Shell>
        <SidebarView />
        <Panel>
          <HeaderView />
          <Content>
            <Gutter><PanelIcon /></Gutter>
            <Article>
              <Tagline>Welcome to your team’s developer platform</Tagline>
              <AskField><AssistantIcon /><Placeholder>Questions?</Placeholder></AskField>
              <Shortcuts>
                {shortcuts.map((s) => (
                  <Shortcut key={s.label}>{s.icon}{s.label}</Shortcut>
                ))}
              </Shortcuts>
              <Table>
                {rows.map((r, i) => (
                  <React.Fragment key={i}>
                    <Cell $blue={i < 3}>{r.lead}</Cell>
                    <Cell $strong>{r.title}</Cell>
                    <Cell><Checkbox /></Cell>
                    <Cell />
                  </React.Fragment>
                ))}
              </Table>
              <Columns>
                <Intro>
                  <Heading>Get started in minutes</Heading>
                  <p>Make your first API call in under 5 minutes.</p>
                  <p>This quickstart walks through the basic setup: create</p>
                </Intro>
                <Rail><StepNumber>1</StepNumber><StepLine /></Rail>
                <Step>
                  <StepTitle>Create your API key</StepTitle>
                  <p>
                    Set up your account, then generate an API<br />
                    key for local testing and your first<br />
                    integration.
                  </p>
                </Step>
              </Columns>
            </Article>
          </Content>
        </Panel>
      </Shell>
    </>
  );
}
